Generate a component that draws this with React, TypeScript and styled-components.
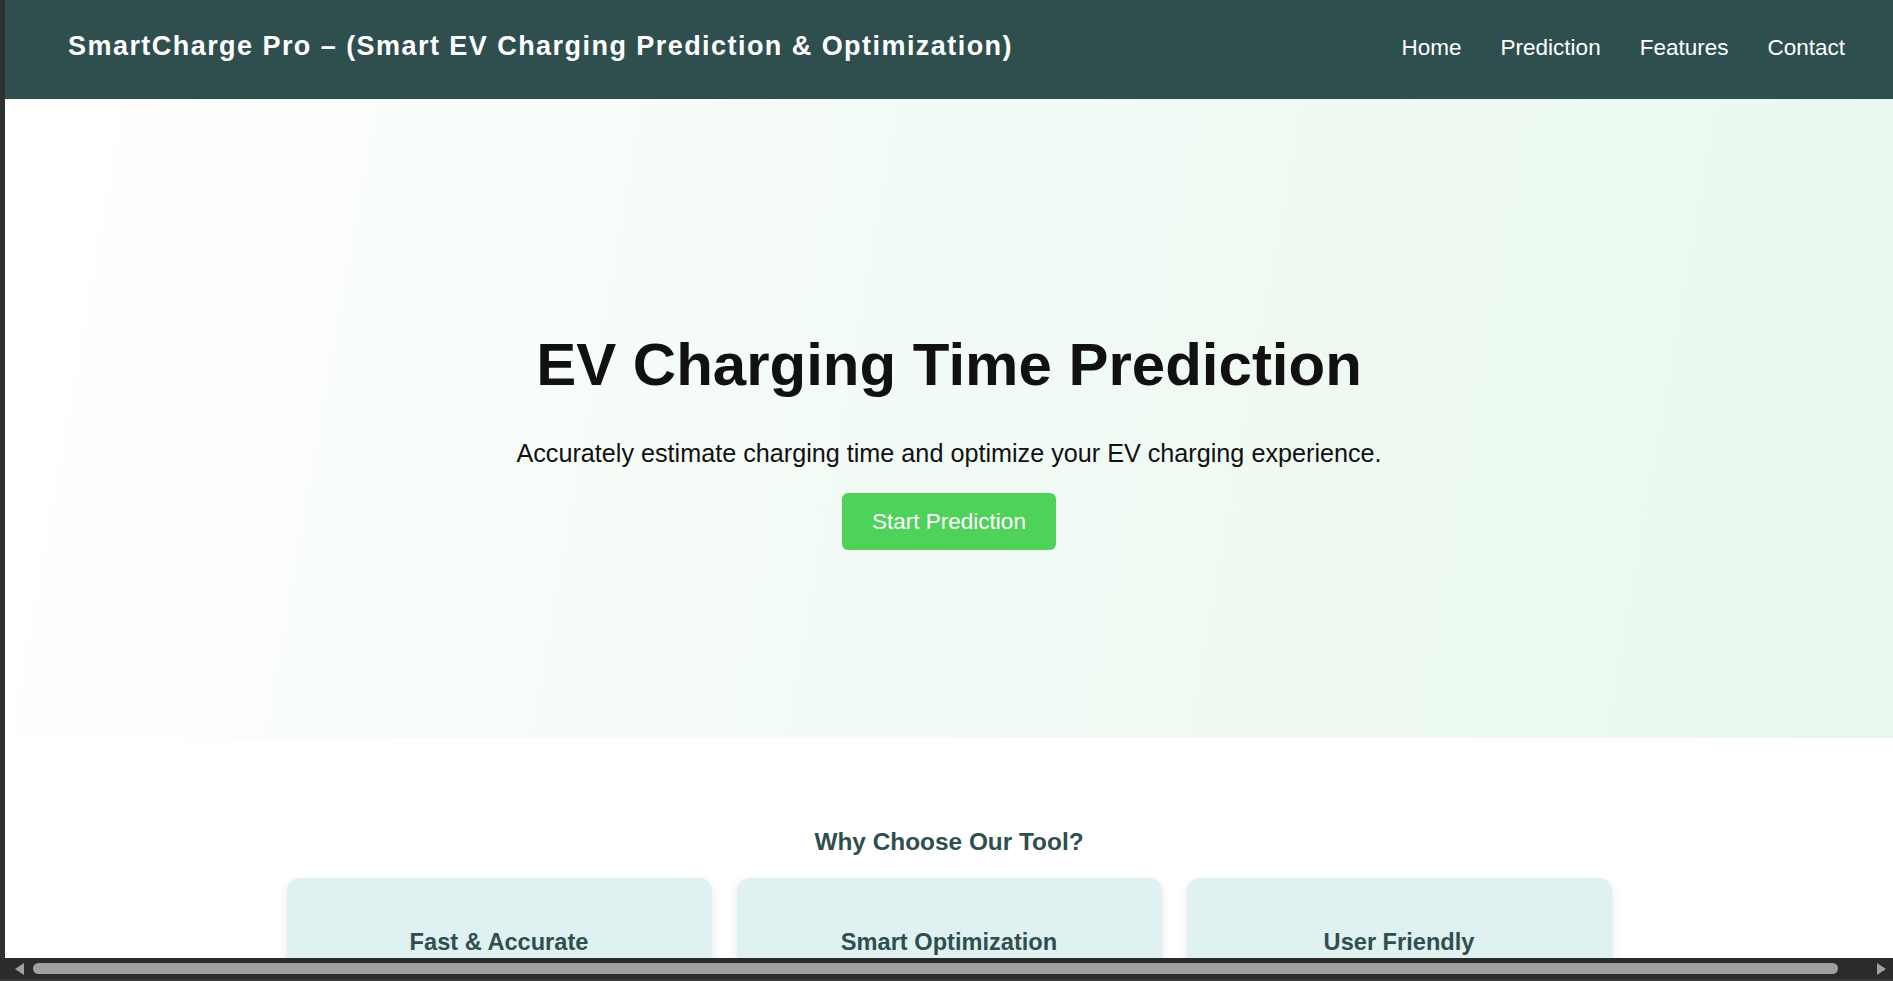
import React from "react";
import styled, { createGlobalStyle } from "styled-components";

const GlobalStyle = createGlobalStyle`
  html, body {
    margin: 0;
    padding: 0;
    height: 100%;
    overflow: hidden;
    background: #2b2b2b;
  }
  #root {
    height: 100%;
  }
  * {
    box-sizing: border-box;
  }
`;

const Window = styled.div`
  display: flex;
  flex-direction: column;
  height: 100vh;
  font-family: "Liberation Sans", Arial, sans-serif;
`;

const Viewport = styled.div`
  flex: 1;
  min-height: 0;
  overflow: hidden;
  background: #ffffff;
  border-left: 5px solid #303030;
`;

const Navbar = styled.header`
  display: flex;
  align-items: baseline;
  justify-content: space-between;
  height: 99px;
  padding: 31px 48px 0 63px;
  background: #2f4f4f;
  color: #ffffff;
`;

const Brand = styled.div`
  font-size: 27px;
  font-weight: 700;
  letter-spacing: 1.45px;
  white-space: nowrap;
`;

const NavLinks = styled.nav`
  display: flex;
  gap: 39px;
`;

const NavLink = styled.a`
  color: #ffffff;
  font-size: 22.5px;
  text-decoration: none;
  cursor: pointer;
`;

const Hero = styled.section`
  display: flex;
  flex-direction: column;
  align-items: center;
  height: 639px;
  padding-top: 231px;
  background: linear-gradient(100deg, #ffffff 0%, #f3fbf6 45%, #e8f8ee 100%);
  text-align: center;
`;

const HeroTitle = styled.h1`
  margin: 0 0 40px;
  font-size: 60px;
  font-weight: 700;
  color: #111111;
  line-height: normal;
`;

const HeroText = styled.p`
  margin: 0 0 25px;
  font-size: 25.2px;
  color: #111111;
  line-height: normal;
`;

const PrimaryButton = styled.button`
  padding: 15.5px 30px;
  border: none;
  border-radius: 6px;
  background: #4ed25a;
  color: #ffffff;
  font-family: inherit;
  font-size: 22.5px;
  line-height: normal;
  cursor: pointer;
`;

const Features = styled.section`
  display: flex;
  flex-direction: column;
  align-items: center;
  padding: 90px 0 60px;
`;

const SectionTitle = styled.h2`
  margin: 0 0 22px;
  font-size: 24.4px;
  font-weight: 700;
  color: #2f4f4f;
  line-height: normal;
`;

const CardGrid = styled.div`
  display: grid;
  grid-template-columns: repeat(3, 425px);
  gap: 25px;
`;

const Card = styled.div`
  padding: 32px 25px 30px;
  border-radius: 13px;
  background: #e0f1f1;
  box-shadow: 0 3px 10px rgba(0, 0, 0, 0.1);
  text-align: center;
`;

const CardTitle = styled.h3`
  margin: 19px 0 12px;
  font-size: 23.6px;
  font-weight: 700;
  color: #2f4f4f;
  line-height: normal;
`;

const CardText = styled.p`
  margin: 0;
  font-size: 20px;
  color: #333333;
`;

const ScrollBar = styled.div`
  display: flex;
  align-items: center;
  height: 23px;
  padding: 0 7px 0 15px;
  background: #2b2b2b;
  border-bottom: 2px solid #383838;
`;

const Arrow = styled.svg`
  flex: none;
  width: 9px;
  height: 12px;
  fill: #a0a0a0;
`;

const Thumb = styled.div`
  flex: none;
  width: 1805px;
  height: 11px;
  margin-left: 9px;
  border-radius: 6px;
  background: #a0a0a0;
`;

const Spacer = styled.div`
  flex: 1;
`;

const features = [
  {
    title: "Fast & Accurate",
    text: "Get reliable charging time estimates in seconds.",
  },
  {
    title: "Smart Optimization",
    text: "Plan charging sessions around cost and availability.",
  },
  {
    title: "User Friendly",
    text: "A simple interface designed for every EV driver.",
  },
];

export default function App() {
  return (
    <>
      <GlobalStyle />
      <Window>
        <Viewport>
          <Navbar>
            <Brand>SmartCharge Pro – (Smart EV Charging Prediction &amp; Optimization)</Brand>
            <NavLinks>
              <NavLink>Home</NavLink>
              <NavLink>Prediction</NavLink>
              <NavLink>Features</NavLink>
              <NavLink>Contact</NavLink>
            </NavLinks>
          </Navbar>
          <Hero>
            <HeroTitle>EV Charging Time Prediction</HeroTitle>
            <HeroText>
              Accurately estimate charging time and optimize your EV charging experience.
            </HeroText>
            <PrimaryButton>Start Prediction</PrimaryButton>
          </Hero>
          <Features>
            <SectionTitle>Why Choose Our Tool?</SectionTitle>
            <CardGrid>
              {features.map((f) => (
                <Card key={f.title}>
                  <CardTitle>{f.title}</CardTitle>
                  <CardText>{f.text}</CardText>
                </Card>
              ))}
            </CardGrid>
          </Features>
        </Viewport>
        <ScrollBar>
          <Arrow viewBox="0 0 9 12">
            <polygon points="9,0 9,12 0,6" />
          </Arrow>
          <Thumb />
          <Spacer />
          <Arrow viewBox="0 0 9 12">
            <polygon points="0,0 0,12 9,6" />
          </Arrow>
        </ScrollBar>
      </Window>
    </>
  );
}
